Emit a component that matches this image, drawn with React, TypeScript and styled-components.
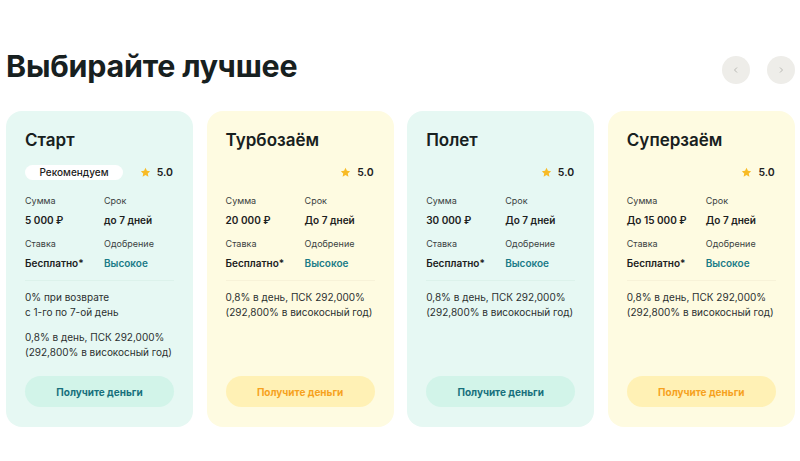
import React from "react";
import styled, { createGlobalStyle } from "styled-components";

const GlobalStyle = createGlobalStyle`
  body {
    margin: 0;
    background: #ffffff;
    font-family: Inter, "Noto Sans", "Liberation Sans", sans-serif;
    color: #1c2121;
  }
`;

type Tone = "mint" | "sun";

const palette = {
  mint: { bg: "#e6f8f3", line: "#dcf2eb", btn: "#d2f4e9", btnText: "#17707c" },
  sun: { bg: "#fefbe1", line: "#f7f2d8", btn: "#fff1b5", btnText: "#f6a21f" },
};

const Page = styled.main`
  padding: 44px 5px 0 6px;
`;

const Header = styled.header`
  display: flex;
  align-items: center;
  justify-content: space-between;
  height: 44px;
`;

const Title = styled.h1`
  margin: 0;
  font-size: 30.4px;
  font-weight: 700;
  letter-spacing: -0.2px;
  color: #172020;
`;

const Arrows = styled.div`
  display: flex;
  gap: 17px;
  margin-top: 8px;
`;

const ArrowButton = styled.button`
  width: 28px;
  height: 28px;
  border-radius: 50%;
  border: none;
  background: #eeede9;
  display: flex;
  align-items: center;
  justify-content: center;
  padding: 0;
  color: #b9b9b4;
`;

const Cards = styled.section`
  display: grid;
  grid-template-columns: repeat(4, 187px);
  gap: 13.6px;
  margin-top: 23px;
`;

const Card = styled.article<{ $tone: Tone }>`
  background: ${(p) => palette[p.$tone].bg};
  border-radius: 16px;
  height: 316px;
  box-sizing: border-box;
  padding: 18px 19px 20px 19px;
  display: flex;
  flex-direction: column;
`;

const CardTitle = styled.h2`
  margin: 0;
  font-size: 17px;
  line-height: 22px;
  font-weight: 600;
  color: #172020;
`;

const MetaRow = styled.div`
  margin-top: 13px;
  height: 16px;
  display: flex;
  align-items: center;
  justify-content: space-between;
`;

const Badge = styled.span`
  background: #ffffff;
  border-radius: 8px;
  height: 15px;
  width: 98px;
  display: flex;
  align-items: center;
  justify-content: center;
  font-size: 10px;
  font-weight: 500;
  color: #1c2121;
`;

const Rating = styled.span`
  display: flex;
  align-items: center;
  gap: 6px;
  margin-left: auto;
  margin-right: 1px;
  font-size: 10.5px;
  font-weight: 600;
  color: #1c2121;
`;

const Facts = styled.dl`
  margin: 14px 0 0 0;
  display: grid;
  grid-template-columns: 79px 1fr;
  row-gap: 10px;
`;

const Fact = styled.div`
  display: flex;
  flex-direction: column;
  gap: 5px;
`;

const Label = styled.dt`
  font-size: 9px;
  line-height: 14px;
  color: #3a3f3f;
`;

const Value = styled.dd<{ $accent?: boolean }>`
  margin: 0;
  font-size: 10px;
  line-height: 14px;
  font-weight: 600;
  color: ${(p) => (p.$accent ? "#1a7b87" : "#1c2121")};
`;

const Divider = styled.hr<{ $tone: Tone }>`
  margin: 10px 0 0 0;
  border: none;
  height: 1px;
  background: ${(p) => palette[p.$tone].line};
`;

const Notes = styled.div`
  margin-top: 9px;
  display: flex;
  flex-direction: column;
  gap: 10px;
`;

const Note = styled.p`
  margin: 0;
  font-size: 10px;
  line-height: 15px;
  white-space: nowrap;
  color: #2b3030;
`;

const CtaButton = styled.button<{ $tone: Tone }>`
  margin-top: auto;
  height: 31px;
  width: 100%;
  border: none;
  border-radius: 16px;
  background: ${(p) => palette[p.$tone].btn};
  color: ${(p) => palette[p.$tone].btnText};
  font-family: inherit;
  font-size: 10px;
  font-weight: 700;
`;

const Star = () => (
  <svg width="11" height="11" viewBox="0 0 24 24">
    <path
      d="M12 1.8l3.1 6.6 7.1.8-5.3 4.9 1.5 7.1L12 17.6l-6.4 3.6 1.5-7.1L1.8 9.2l7.1-.8z"
      fill="#f8bb26"
    />
  </svg>
);

const Chevron = ({ dir }: { dir: "left" | "right" }) => (
  <svg width="8" height="8" viewBox="0 0 8 8">
    <path
      d={dir === "left" ? "M5 1.5L2.5 4 5 6.5" : "M3 1.5L5.5 4 3 6.5"}
      stroke="currentColor"
      strokeWidth="1"
      fill="none"
    />
  </svg>
);

type Offer = {
  name: string;
  tone: Tone;
  badge?: string;
  sum: string;
  term: string;
  notes: string[][];
};

const offers: Offer[] = [
  {
    name: "Старт",
    tone: "mint",
    badge: "Рекомендуем",
    sum: "5 000 ₽",
    term: "до 7 дней",
    notes: [
      ["0% при возврате", "с 1-го по 7-ой день"],
      ["0,8% в день, ПСК 292,000%", "(292,800% в високосный год)"],
    ],
  },
  {
    name: "Турбозаём",
    tone: "sun",
    sum: "20 000 ₽",
    term: "До 7 дней",
    notes: [["0,8% в день, ПСК 292,000%", "(292,800% в високосный год)"]],
  },
  {
    name: "Полет",
    tone: "mint",
    sum: "30 000 ₽",
    term: "До 7 дней",
    notes: [["0,8% в день, ПСК 292,000%", "(292,800% в високосный год)"]],
  },
  {
    name: "Суперзаём",
    tone: "sun",
    sum: "До 15 000 ₽",
    term: "До 7 дней",
    notes: [["0,8% в день, ПСК 292,000%", "(292,800% в високосный год)"]],
  },
];

export default function App() {
  return (
    <>
      <GlobalStyle />
      <Page>
        <Header>
          <Title>Выбирайте лучшее</Title>
          <Arrows>
            <ArrowButton aria-label="Назад">
              <Chevron dir="left" />
            </ArrowButton>
            <ArrowButton aria-label="Вперёд">
              <Chevron dir="right" />
            </ArrowButton>
          </Arrows>
        </Header>
        <Cards>
          {offers.map((o) => (
            <Card key={o.name} $tone={o.tone}>
              <CardTitle>{o.name}</CardTitle>
              <MetaRow>
                {o.badge && <Badge>{o.badge}</Badge>}
                <Rating>
                  <Star />
                  5.0
                </Rating>
              </MetaRow>
              <Facts>
                <Fact>
                  <Label>Сумма</Label>
                  <Value>{o.sum}</Value>
                </Fact>
                <Fact>
                  <Label>Срок</Label>
                  <Value>{o.term}</Value>
                </Fact>
                <Fact>
                  <Label>Ставка</Label>
                  <Value>Бесплатно*</Value>
                </Fact>
                <Fact>
                  <Label>Одобрение</Label>
                  <Value $accent>Высокое</Value>
                </Fact>
              </Facts>
              <Divider $tone={o.tone} />
              <Notes>
                {o.notes.map((lines, i) => (
                  <Note key={i}>
                    {lines[0]}
                    <br />
                    {lines[1]}
                  </Note>
                ))}
              </Notes>
              <CtaButton $tone={o.tone}>Получите деньги</CtaButton>
            </Card>
          ))}
        </Cards>
      </Page>
    </>
  );
}
